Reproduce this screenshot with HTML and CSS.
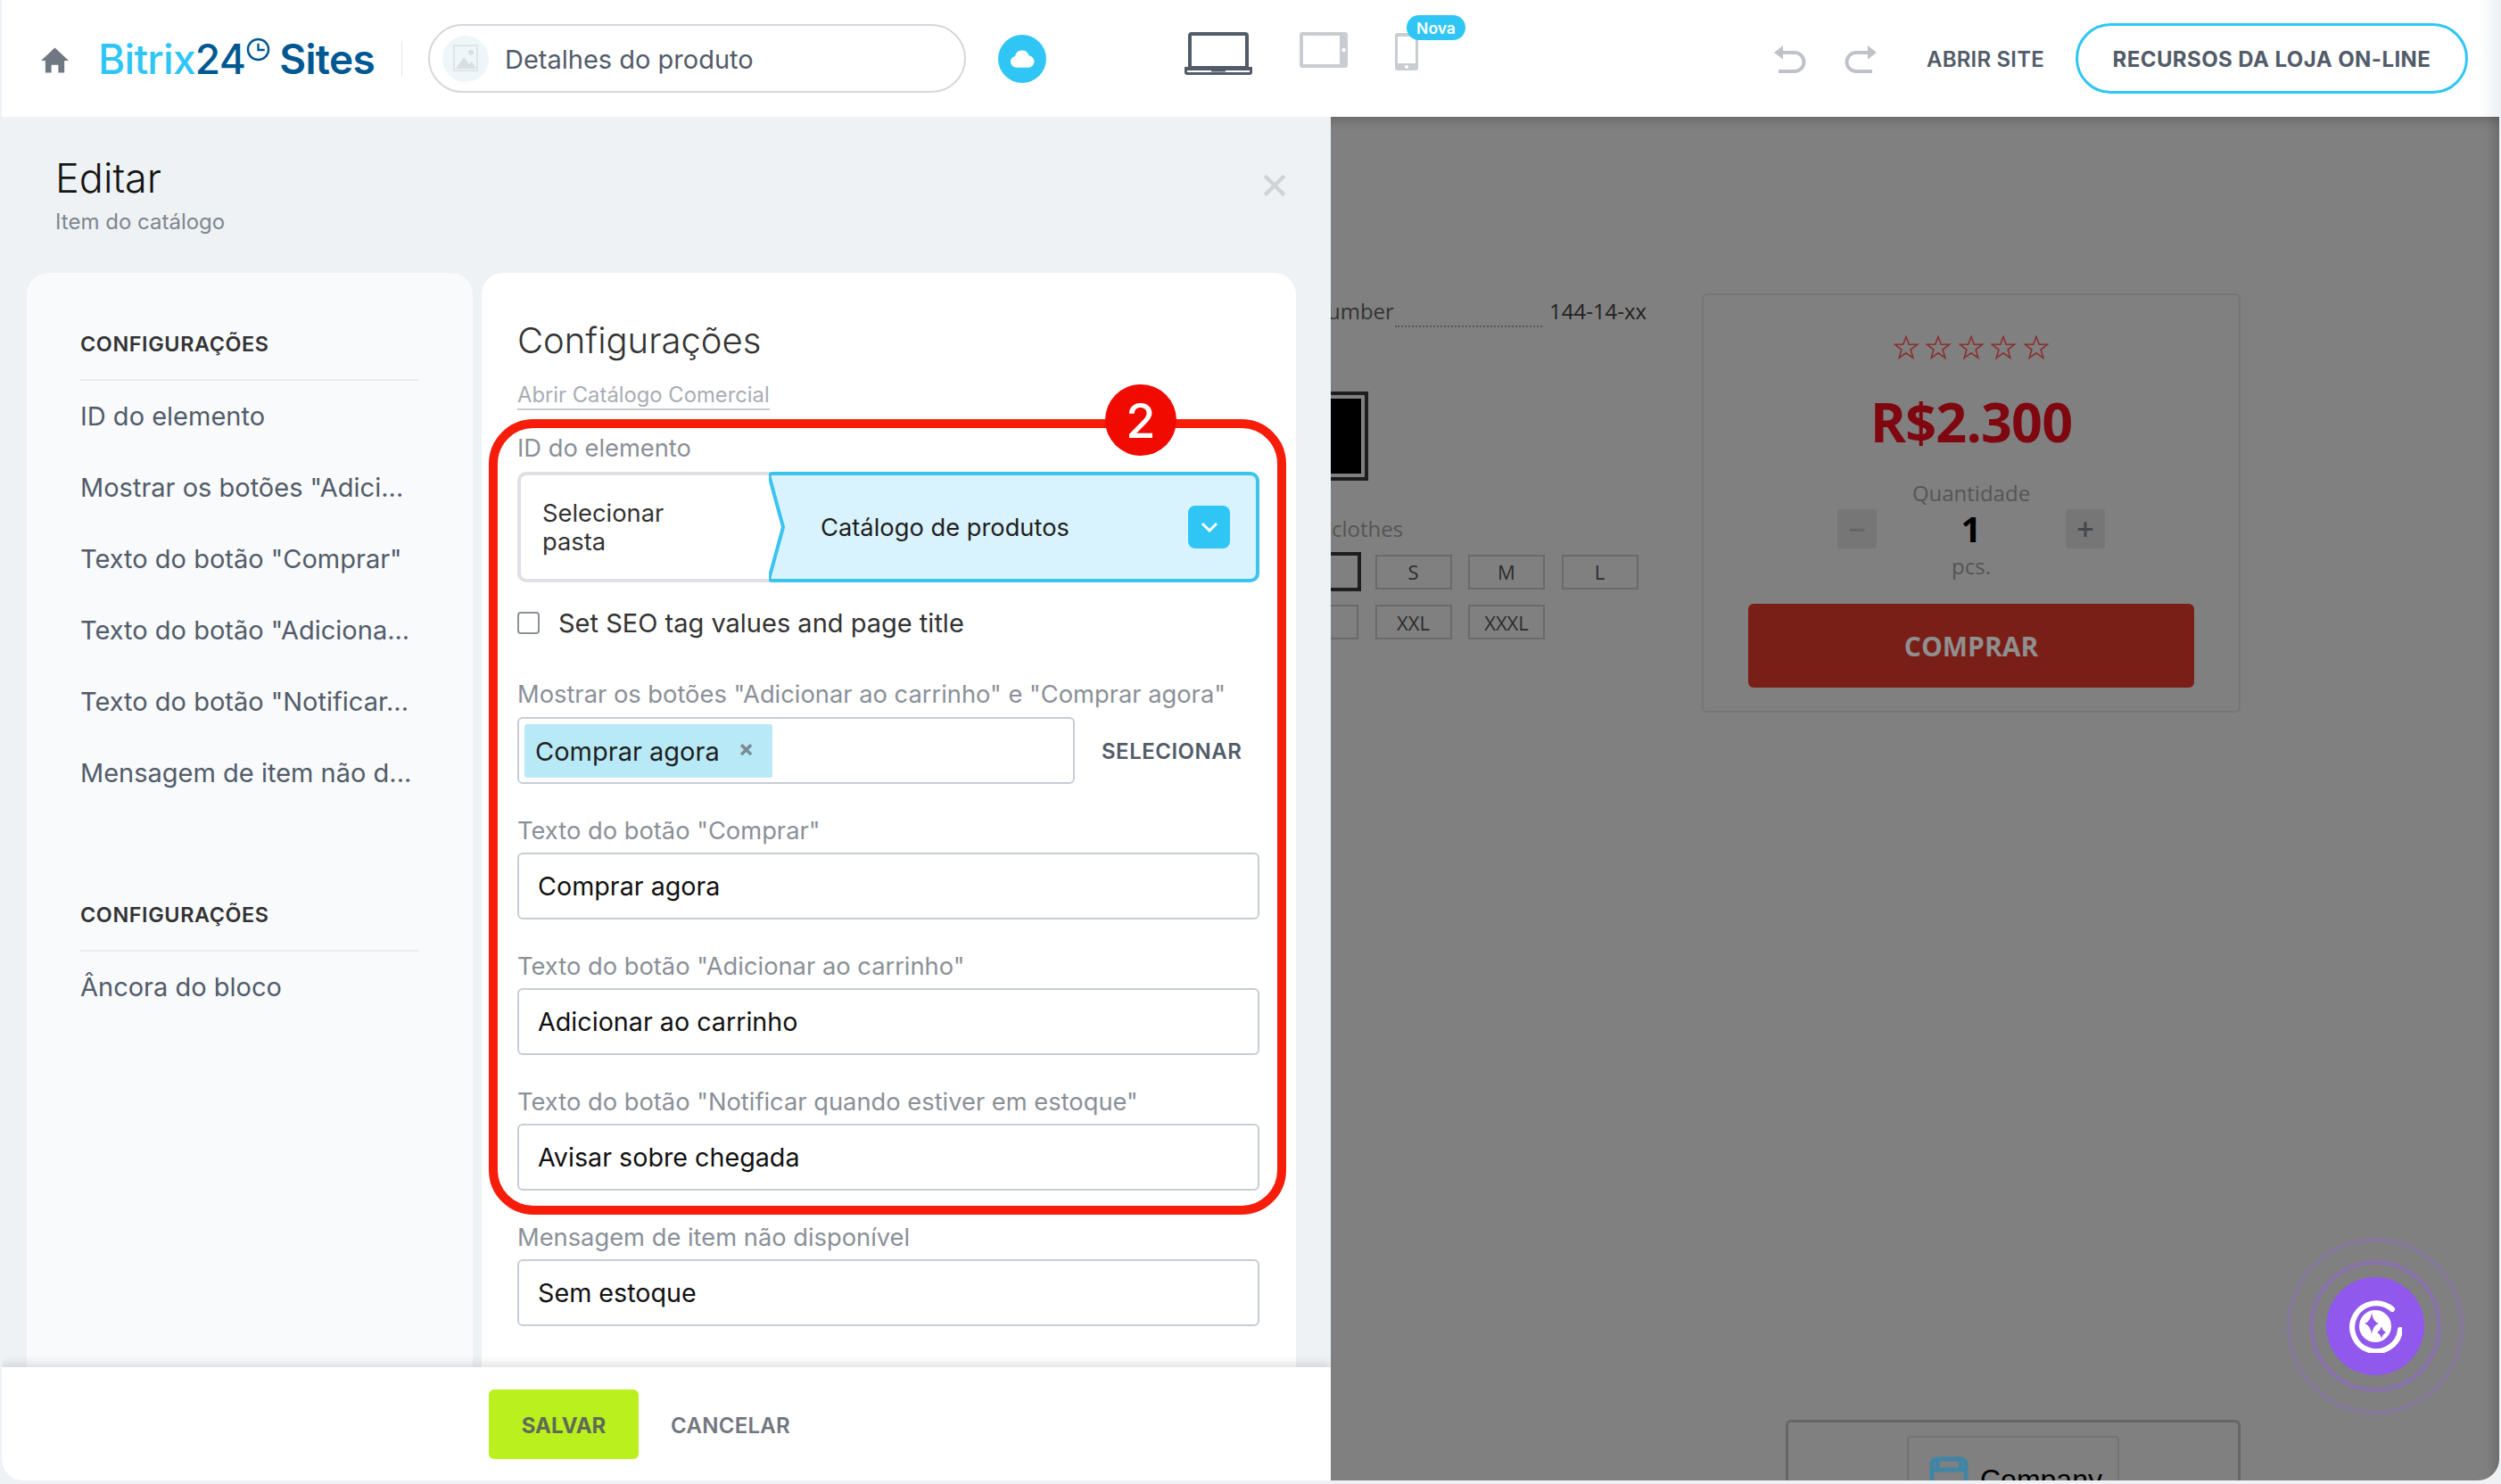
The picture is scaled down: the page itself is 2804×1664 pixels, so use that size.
FILE: index.html
```html
<!DOCTYPE html>
<html lang="pt">
<head>
<meta charset="utf-8">
<title>Bitrix24 Sites</title>
<link rel="stylesheet" href="styles.css">
</head>
<body>
<div class="window">
  <header class="topbar">
    <svg class="home" viewBox="0 0 32 29"><path d="M16 0 32 15h-5v14h-7v-9h-8v9H5V15H0z"/></svg>
    <div class="logo"><span class="lb">Bitrix</span><span class="ld">24</span><svg class="clock" viewBox="0 0 28 28"><circle cx="14" cy="14" r="12"/><path d="M14 7v7.500h7.500"/></svg><span class="ld sites">Sites</span></div>
    <div class="sep"></div>
    <div class="pill">
      <span class="thumb"><svg viewBox="0 0 30 34"><rect x="2" y="2" width="26" height="28" fill="none" stroke="#dfe6ea" stroke-width="2"/><path d="M4 28 13 15l6 8 3-3 5 8z" fill="#d8dfe3"/><circle cx="21" cy="10" r="3" fill="#d8dfe3"/></svg></span>
      <span class="pill-text">Detalhes do produto</span>
    </div>
    <span class="cloud"><svg viewBox="0 0 32 24"><path d="M9 23a7 7 0 0 1-1.500-13.800A8.500 8.500 0 0 1 24 8.500 7.300 7.300 0 0 1 24 23z" fill="#fff"/></svg></span>
    <div class="devices">
      <svg class="laptop" viewBox="0 0 76 48"><path d="M8 2h60a2 2 0 0 1 2 2v36H6V4a2 2 0 0 1 2-2z" fill="none" stroke="#525c69" stroke-width="4"/><path d="M0 39h76v6a3 3 0 0 1-3 3H3a3 3 0 0 1-3-3z" fill="#525c69"/><path d="M3 43h27v1.500h16V43h27v2H3z" fill="#fff"/></svg>
      <svg class="tablet" viewBox="0 0 54 40"><rect width="54" height="40" rx="3" fill="#c9ccd0"/><rect x="4" y="4" width="41" height="32" fill="#fff"/><circle cx="49.500" cy="20" r="2.200" fill="#fff"/></svg>
      <div class="phone-wrap">
        <svg class="phone" viewBox="0 0 26 42"><rect width="26" height="42" rx="3" fill="#c9ccd0"/><rect x="3" y="4" width="20" height="30" fill="#fff"/><circle cx="13" cy="38" r="2" fill="#fff"/></svg>
        <span class="nova">Nova</span>
      </div>
    </div>
    <svg class="hist first" viewBox="0 0 36 32"><path d="M8 8H23a10.500 10.500 0 0 1 0 21H5" fill="none" stroke="#bfc2c8" stroke-width="4"/><path d="M10 0v15.500L0 8z" fill="#bfc2c8"/></svg>
    <svg class="hist second" viewBox="0 0 36 32"><path d="M28 8H13a10.500 10.500 0 0 0 0 21H31" fill="none" stroke="#bfc2c8" stroke-width="4"/><path d="M26 0v15.500L36 8z" fill="#bfc2c8"/></svg>
    <span class="open-site">ABRIR SITE</span>
    <span class="store-btn">RECURSOS DA LOJA ON-LINE</span>
  </header>
  <div class="body">
    <aside class="panel">
      <div class="panel-head">
        <div>
          <h1 class="panel-title">Editar</h1>
          <p class="panel-sub">Item do catálogo</p>
        </div>
        <svg class="close" viewBox="0 0 24 24"><path d="M2 2l20 20M22 2 2 22"/></svg>
      </div>
      <div class="cards">
        <nav class="side">
          <h3 class="side-h">CONFIGURAÇÕES</h3>
          <a class="side-i">ID do elemento</a>
          <a class="side-i">Mostrar os botões "Adici...</a>
          <a class="side-i">Texto do botão "Comprar"</a>
          <a class="side-i">Texto do botão "Adiciona...</a>
          <a class="side-i">Texto do botão "Notificar...</a>
          <a class="side-i">Mensagem de item não d...</a>
          <h3 class="side-h second-h">CONFIGURAÇÕES</h3>
          <a class="side-i">Âncora do bloco</a>
        </nav>
        <section class="main">
          <h2 class="main-title">Configurações</h2>
          <a class="cat-link">Abrir Catálogo Comercial</a>
          <div class="mark"><span class="mark-num">2</span></div>
          <label class="lbl first-lbl">ID do elemento</label>
          <div class="picker">
            <div class="picker-l">Selecionar<br>pasta</div>
            <div class="picker-r">
              <svg class="picker-shape" viewBox="0 0 549 124" preserveAspectRatio="none"><path d="M4 2H539a8 8 0 0 1 8 8V114a8 8 0 0 1-8 8H4Q0 122 1 117L16 62 1 7Q0 2 4 2Z" fill="#d9f3fe" stroke="#3cc3ef" stroke-width="4"/></svg>
              <span class="picker-text">Catálogo de produtos</span>
              <span class="chev"><svg viewBox="0 0 20 12"><path d="M2 2l8 8 8-8"/></svg></span>
            </div>
          </div>
          <div class="check"><span class="box"></span><span>Set SEO tag values and page title</span></div>
          <label class="lbl">Mostrar os botões "Adicionar ao carrinho" e "Comprar agora"</label>
          <div class="tag-row">
            <div class="tag-field"><span class="tag">Comprar agora<i class="tag-x">×</i></span></div>
            <span class="tag-btn">SELECIONAR</span>
          </div>
          <label class="lbl gap">Texto do botão "Comprar"</label>
          <div class="input">Comprar agora</div>
          <label class="lbl gap">Texto do botão "Adicionar ao carrinho"</label>
          <div class="input">Adicionar ao carrinho</div>
          <label class="lbl gap">Texto do botão "Notificar quando estiver em estoque"</label>
          <div class="input">Avisar sobre chegada</div>
          <label class="lbl gap">Mensagem de item não disponível</label>
          <div class="input">Sem estoque</div>
        </section>
      </div>
      <footer class="foot">
        <span class="save">SALVAR</span>
        <span class="cancel">CANCELAR</span>
      </footer>
    </aside>
    <main class="preview">
      <div class="row">
        <div class="specs">
          <div class="spec-line"><span class="spec-k">umber</span><span class="dots"></span><span class="spec-v">144-14-xx</span></div>
          <div class="swatch"><span></span></div>
          <div class="clothes">clothes</div>
          <div class="sizes">
            <span class="size sel cut"></span><span class="size">S</span><span class="size">M</span><span class="size">L</span>
          </div>
          <div class="sizes">
            <span class="size cut"></span><span class="size">XXL</span><span class="size">XXXL</span>
          </div>
        </div>
        <div class="buy">
          <svg class="stars" viewBox="0 0 174 27">
            <g fill="none" stroke="#8a2f2f" stroke-width="1.600">
              <path d="M14 1.500 17.300 10.200H26.500L19.100 16 21.800 25.300 14 19.800 6.200 25.300 8.900 16 1.500 10.200H10.700Z"/>
              <path transform="translate(36)" d="M14 1.500 17.300 10.200H26.500L19.100 16 21.800 25.300 14 19.800 6.200 25.300 8.900 16 1.500 10.200H10.700Z"/>
              <path transform="translate(73)" d="M14 1.500 17.300 10.200H26.500L19.100 16 21.800 25.300 14 19.800 6.200 25.300 8.900 16 1.500 10.200H10.700Z"/>
              <path transform="translate(109)" d="M14 1.500 17.300 10.200H26.500L19.100 16 21.800 25.300 14 19.800 6.200 25.300 8.900 16 1.500 10.200H10.700Z"/>
              <path transform="translate(146)" d="M14 1.500 17.300 10.200H26.500L19.100 16 21.800 25.300 14 19.800 6.200 25.300 8.900 16 1.500 10.200H10.700Z"/>
            </g>
          </svg>
          <div class="price">R$2.300</div>
          <div class="qty-l">Quantidade</div>
          <div class="qty"><span class="qbtn minus">−</span><span class="qnum">1</span><span class="qbtn">+</span></div>
          <div class="pcs">pcs.</div>
          <div class="buy-btn">COMPRAR</div>
        </div>
      </div>
      <div class="company">
        <div class="company-in">
          <svg viewBox="0 0 50 50"><path d="M6 48V14a6 6 0 0 1 6-6h26a6 6 0 0 1 6 6v34M12 20V8M38 20V8M6 20h38" fill="none" stroke="#3f86a6" stroke-width="5"/></svg>
          <span>Company</span>
        </div>
      </div>
      <div class="ai">
        <span class="ring r2"></span><span class="ring r1"></span>
        <span class="ai-btn"><svg viewBox="0 0 60 60"><path d="M49 11A27 27 0 1 0 58 34" fill="none" stroke="#fff" stroke-width="6" stroke-linecap="round"/><circle cx="30" cy="30" r="18" fill="#fff"/><path d="M26 15q1.500 10 8 12q-6.500 2-8 12q-1.500-10-8-12q6.500-2 8-12z" fill="#9058ec"/><path d="M37 30q1 5 5 7q-4 2-5 7q-1-5-5-7q4-2 5-7z" fill="#9058ec"/></svg></span>
      </div>
    </main>
  </div>
</div>
</body>
</html>
```

FILE: styles.css
```css
* { box-sizing: border-box; }
html, body { margin: 0; padding: 0; }
body { width: 2804px; height: 1664px; background: #eef2f4; font-family: Inter, "Noto Sans", sans-serif; overflow: hidden; }
.window { width: 2800px; height: 1660px; margin-left: 2px; border-radius: 0 0 24px 24px; overflow: hidden; display: flex; flex-direction: column; }

.topbar { height: 131px; background: linear-gradient(to left, #eef2f4 0, #fff 22px); display: flex; align-items: center; flex: none; }
.home { width: 31px; height: 29px; margin: 3px 0 0 44px; fill: #6f7783; flex: none; }
.logo { margin: 0 0 0 33px; font-size: 46px; font-weight: 500; letter-spacing: -.7px; white-space: nowrap; display: flex; align-items: flex-start; width: 340px; }
.lb { color: #2fc6f6; }
.ld { color: #005893; }
.clock { width: 27px; height: 27px; margin: 4px 0 0 1px; fill: none; stroke: #005893; stroke-width: 2.500; flex: none; }
.sites { margin-left: 10px; font-weight: 600; }
.sep { width: 1px; height: 40px; background: #e6e8ea; flex: none; }
.pill { width: 603px; height: 77px; margin-left: 29px; border: 2px solid #d5d7db; border-radius: 39px; display: flex; align-items: center; padding-left: 14px; flex: none; }
.thumb { width: 52px; height: 52px; border-radius: 50%; background: #eef6fa; display: flex; align-items: center; justify-content: center; }
.thumb svg { width: 30px; height: 34px; }
.pill-text { margin: 1px 0 0 18px; font-size: 29px; color: #525c69; }
.cloud { width: 54px; height: 54px; border-radius: 50%; background: #2fc6f6; margin-left: 36px; display: flex; align-items: center; justify-content: center; flex: none; }
.cloud svg { width: 30px; height: 23px; }
.devices { display: flex; align-items: flex-start; margin-left: 155px; flex: none; height: 48px; margin-top: -11px; }
.laptop { width: 76px; height: 48px; }
.tablet { width: 54px; height: 40px; margin-left: 53px; }
.phone-wrap { position: relative; margin-left: 53px; }
.phone { width: 26px; height: 42px; display: block; margin-top: 1px; }
.nova { position: absolute; left: 13px; top: -19px; width: 66px; height: 28px; border-radius: 14px; background: #2fc6f6; color: #fff; font-size: 17.500px; font-weight: 600; display: flex; align-items: center; justify-content: center; }
.hist { width: 36px; height: 32px; flex: none; margin-top: 2px; }
.hist.first { margin-left: 399px; }
.hist.second { margin-left: 43px; }
.open-site { margin: 1px 0 0 56px; font-size: 24px; font-weight: 600; letter-spacing: .2px; color: #525c69; white-space: nowrap; }
.store-btn { margin: 0 0 0 35px; width: 440px; height: 79px; padding-top: 1px; border: 3px solid #2fc6f6; border-radius: 40px; display: flex; align-items: center; justify-content: center; font-size: 24px; font-weight: 700; letter-spacing: .42px; color: #525c69; white-space: nowrap; flex: none; }

.body { flex: 1; display: flex; min-height: 0; }
.panel { width: 1490px; flex: none; background: #eef2f4; display: flex; flex-direction: column; }
.panel-head { height: 175px; flex: none; display: flex; justify-content: space-between; padding: 40px 50px 0 60px; }
.panel-title { margin: 0; font-size: 45px; line-height: 58px; font-weight: 300; color: #151515; }
.panel-sub { margin: 4px 0 0; font-size: 24px; line-height: 32px; color: #80868e; }
.close { width: 26px; height: 26px; margin: 24px 0 0; fill: none; stroke: #cfd3d6; stroke-width: 4; }
.cards { flex: 1; min-height: 0; display: flex; gap: 10px; padding: 0 39px 0 28px; overflow: hidden; }
.side { width: 500px; flex: none; background: #f8fafc; border-radius: 24px 24px 0 0; padding: 63px 60px 0; }
.side-h { margin: 0; padding-bottom: 22px; border-bottom: 2px solid #e9ecef; font-size: 23.400px; line-height: 34px; font-weight: 600; letter-spacing: .6px; color: #333; }
.side-i { display: block; font-size: 29px; line-height: 40px; color: #525c69; margin-top: 40px; white-space: nowrap; }
.side-h + .side-i { margin-top: 20px; }
.second-h { margin-top: 122px; }
.main { flex: 1; background: #fff; border-radius: 24px 24px 0 0; padding: 51px 41px 0 40px; position: relative; overflow: hidden; }
.main-title { margin: 0; font-size: 40px; line-height: 50px; font-weight: 300; color: #333; }
.cat-link { display: inline-block; margin-top: 21px; font-size: 23.800px; line-height: 30px; color: #a8adb4; border-bottom: 2px solid #c6cad0; }
.mark { position: absolute; left: 8px; top: 164px; width: 894px; height: 892px; border: 10px solid #f61e0a; border-radius: 50px; }
.mark-num { position: absolute; left: 681px; top: -49px; width: 80px; height: 80px; border-radius: 50%; background: #f00a00; color: #fff; font-size: 54px; font-weight: 500; display: flex; align-items: center; justify-content: center; }
.lbl { display: block; font-size: 27.300px; line-height: 34px; color: #8a9098; white-space: nowrap; }
.first-lbl { margin-top: 26px; }
.gap { margin-top: 36px; margin-bottom: 7px; }
.picker { margin-top: 9px; height: 124px; display: flex; }
.picker-l { width: 287px; flex: none; border: 4px solid #dfe0e3; border-right: 0; border-radius: 10px 0 0 10px; padding: 27px 0 0 24px; font-size: 27.300px; line-height: 32px; color: #333; }
.picker-r { flex: 1; margin-left: -5px; position: relative; display: flex; align-items: center; justify-content: space-between; padding: 0 33px 0 58px; }
.picker-shape { position: absolute; inset: 0; width: 100%; height: 100%; }
.picker-text { position: relative; font-size: 27.300px; color: #1f1f1f; }
.chev { position: relative; width: 47px; height: 48px; border-radius: 8px; background: #2fc6f6; display: flex; align-items: center; justify-content: center; }
.chev svg { width: 20px; height: 12px; fill: none; stroke: #fff; stroke-width: 3; }
.check { display: flex; align-items: center; margin-top: 32px; height: 26px; font-size: 29px; color: #333; }
.box { width: 25px; height: 25px; border: 2px solid #8d9197; border-radius: 4px; margin-right: 21px; background: #fff; }
.check + .lbl { margin-top: 51px; }
.tag-row { margin-top: 8px; display: flex; align-items: center; }
.tag-field { width: 625px; height: 75px; border: 2px solid #c6cdd3; border-radius: 6px; padding: 6px; flex: none; }
.tag { width: 278px; height: 60px; background: #b8e9f6; border-radius: 3px; display: flex; align-items: center; padding-left: 12px; font-size: 29px; color: #1f1f1f; }
.tag-x { font-style: normal; font-weight: 700; font-size: 26px; line-height: 1; color: #7b8b93; margin: -4px 0 0 21px; }
.tag-btn { margin: 2px 0 0 30px; font-size: 24px; font-weight: 600; letter-spacing: .5px; color: #525c69; }
.input { height: 75px; border: 2px solid #c6cdd3; border-radius: 6px; padding-left: 21px; display: flex; align-items: center; font-size: 28.700px; color: #111; }
.foot { height: 127px; flex: none; background: #fff; display: flex; align-items: center; padding-left: 546px; box-shadow: 0 -4px 10px rgba(0,0,0,.12); position: relative; }
.save { width: 168px; height: 78px; padding-top: 4px; background: #bbf01f; border-radius: 6px; display: flex; align-items: center; justify-content: center; font-size: 24px; font-weight: 700; color: #5f6b57; }
.cancel { margin: 4px 0 0 36px; font-size: 24px; font-weight: 600; letter-spacing: .3px; color: #71767e; }

.preview { flex: 1; background: #808080; position: relative; overflow: hidden; font-family: "Open Sans", sans-serif; display: flex; flex-direction: column; box-shadow: inset 0 14px 14px -12px rgba(0,0,0,.25), inset -16px 0 14px -12px rgba(0,0,0,.2); }
.row { display: flex; height: 668px; flex: none; padding-top: 198px; }
.specs { width: 416px; flex: none; }
.spec-line { display: flex; align-items: center; height: 38px; font-size: 24px; color: #222; }
.spec-k { width: 76px; margin-left: -4px; flex: none; color: #333; }
.dots { width: 165px; align-self: flex-end; border-bottom: 2px dotted #555; }
.spec-v { margin-left: 8px; }
.swatch { width: 42px; height: 100px; margin-top: 72px; border: 4px solid #1e1e1e; border-left: 0; padding: 4px 4px 4px 0; }
.swatch span { display: block; height: 100%; background: #000; }
.clothes { margin-top: 36px; padding-left: 1px; font-size: 24px; line-height: 36px; color: #555; }
.sizes { display: flex; gap: 18.500px; margin-top: 8px; align-items: center; }
.size { width: 86px; height: 39px; border: 2px solid #6a6a6a; font-size: 22px; color: #2c2c2c; display: flex; align-items: center; justify-content: center; flex: none; }
.cut { width: 31px; border-left: 0; }
.sel { width: 34px; height: 44px; border: 4px solid #1e1e1e; border-left: 0; margin-right: -3px; }
.sizes + .sizes { margin-top: 15px; }
.buy { width: 604px; height: 470px; flex: none; border: 2px solid #767676; border-radius: 6px; display: flex; flex-direction: column; align-items: center; }
.stars { width: 174px; height: 27px; margin-top: 45px; flex: none; }
.price { margin-top: 28px; font-size: 61px; line-height: 84px; font-weight: 700; letter-spacing: -.8px; color: #7f0710; }
.qty-l { margin-top: 21px; font-size: 24px; line-height: 34px; color: #555; }
.qty { width: 300px; margin-top: 1px; display: flex; align-items: center; justify-content: space-between; }
.qbtn { width: 44px; height: 44px; background: #767676; border-radius: 3px; display: flex; align-items: center; justify-content: center; font-size: 34px; font-weight: 600; color: #45474c; }
.minus { color: #656565; }
.qnum { font-size: 40px; line-height: 44px; font-weight: 700; color: #000; }
.pcs { font-size: 24px; line-height: 40px; color: #555; }
.buy-btn { width: 500px; height: 94px; margin-top: 22px; background: #7a1f18; border-radius: 6px; display: flex; align-items: center; justify-content: center; font-size: 30px; font-weight: 700; color: #8f8f8f; }
.company { width: 510px; height: 80px; margin: 793px 0 0 510px; border: 3px solid #666; border-bottom: 0; border-radius: 6px 6px 0 0; padding-top: 15px; display: flex; justify-content: center; flex: none; }
.company-in { width: 238px; height: 70px; border: 2px solid #747474; border-radius: 4px; display: flex; padding: 29px 0 0 20px; gap: 10px; font-family: "Liberation Sans", sans-serif; font-size: 32px; color: #000; }
.company-in svg { width: 50px; height: 50px; flex: none; margin-top: -13px; }
.ai { position: absolute; left: 1171px; top: 1356px; width: 0; height: 0; }
.ring { position: absolute; border-radius: 50%; border: 4px solid rgba(147,95,235,.25); }
.r1 { width: 148px; height: 148px; left: -74px; top: -74px; border-width: 5px; border-color: rgba(147,95,235,.38); }
.r2 { width: 198px; height: 198px; left: -99px; top: -99px; }
.ai-btn { position: absolute; left: -55px; top: -55px; width: 110px; height: 110px; border-radius: 50%; background: #9058ec; display: flex; align-items: center; justify-content: center; }
.ai-btn svg { width: 60px; height: 60px; }
```
